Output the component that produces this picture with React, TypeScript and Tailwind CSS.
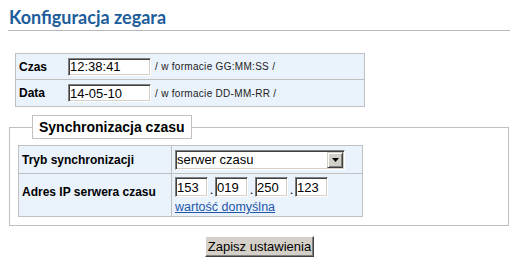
const inset =
  "border border-t-[#808080] border-l-[#808080] border-b-white border-r-white shadow-[inset_1px_1px_0_#404040,inset_-1px_-1px_0_#d4d0c8] bg-white";

function TextBox({ value, className }: { value: string; className: string }) {
  return (
    <input
      readOnly
      value={value}
      className={`${inset} ${className} px-[1px] text-[13px] leading-[14px] text-black outline-none`}
    />
  );
}

function Note({ children }: { children: React.ReactNode }) {
  return (
    <span className="ml-[4px] text-[10px] tracking-[0.3px] text-[#222]">
      {children}
    </span>
  );
}

export default function App() {
  return (
    <div className="w-[517px] h-[272px] bg-white pl-[8px] pr-[7px] font-['Liberation_Sans',Arial,sans-serif] text-black">
      <h1 className="mt-[7px] pl-[1px] pb-[3px] border-b border-[#b8b8b8] font-['Lato',sans-serif] text-[18px] leading-[20px] font-bold text-[#1e5d9b]">
        Konfiguracja zegara
      </h1>

      {/* czas / data */}
      <div className="ml-[7px] mt-[22px] w-[350px] border border-[#c0c0c0] bg-[#eaf2fb]">
        <div className="grid grid-cols-[52px_1fr] h-[26px] items-center border-b border-[#c0c0c0]">
          <span className="pl-[3px] text-[12px] font-bold">Czas</span>
          <div className="flex items-center">
            <TextBox value="12:38:41" className="w-[83px] h-[18px]" />
            <Note>/ w formacie GG:MM:SS /</Note>
          </div>
        </div>
        <div className="grid grid-cols-[52px_1fr] h-[26px] items-center">
          <span className="pl-[3px] text-[12px] font-bold">Data</span>
          <div className="flex items-center">
            <TextBox value="14-05-10" className="w-[83px] h-[18px]" />
            <Note>/ w formacie DD-MM-RR /</Note>
          </div>
        </div>
      </div>

      {/* synchronizacja */}
      <fieldset className="ml-[1px] mt-[8px] w-[500px] border border-[#c0c0c0] pl-[8px] pb-[8px]">
        <legend className="ml-[14px] px-[6px] border border-[#c0c0c0] bg-white text-[14px] leading-[22px] font-bold">
          Synchronizacja czasu
        </legend>

        <div className="mt-[6px] w-[345px] border border-[#c0c0c0] bg-[#eaf2fb]">
          <div className="grid grid-cols-[152px_1px_1fr] h-[28px] border-b border-[#c0c0c0]">
            <span className="flex items-center pl-[3px] text-[12px] font-bold">
              Tryb synchronizacji
            </span>
            <div className="bg-[#c0c0c0]" />
            <div className="flex items-center pl-[3px]">
              <div className={`${inset} flex items-center justify-between w-[170px] h-[20px] pl-[1px] pr-[1px]`}>
                <span className="text-[13px] leading-[14px]">serwer czasu</span>
                <span className="flex items-center justify-center w-[16px] h-[16px] bg-[#d4d0c8] border border-t-[#d4d0c8] border-l-[#d4d0c8] border-b-[#404040] border-r-[#404040] shadow-[inset_1px_1px_0_#ffffff,inset_-1px_-1px_0_#808080]">
                  <svg width="7" height="4" viewBox="0 0 7 4">
                    <path d="M0 0h7L3.5 4z" fill="#000" />
                  </svg>
                </span>
              </div>
            </div>
          </div>
          <div className="grid grid-cols-[152px_1px_1fr] h-[42px]">
            <span className="flex items-center pl-[3px] pb-[7px] text-[12px] font-bold">
              Adres IP serwera czasu
            </span>
            <div className="bg-[#c0c0c0]" />
            <div className="flex flex-col pl-[3px] pt-[3px]">
              <div className="flex items-end">
                <TextBox value="153" className="w-[33px] h-[20px]" />
                <span className="w-[7px] text-center text-[13px] leading-[14px]">.</span>
                <TextBox value="019" className="w-[33px] h-[20px]" />
                <span className="w-[7px] text-center text-[13px] leading-[14px]">.</span>
                <TextBox value="250" className="w-[33px] h-[20px]" />
                <span className="w-[7px] text-center text-[13px] leading-[14px]">.</span>
                <TextBox value="123" className="w-[33px] h-[20px]" />
              </div>
              <a href="#" className="mt-[3px] text-[12.5px] leading-[14px] text-[#2356a8] underline">
                wartość domyślna
              </a>
            </div>
          </div>
        </div>
      </fieldset>

      <div className="flex justify-center mt-[10px] pl-[1px]">
        <button className="h-[21px] w-[109px] bg-[#d4d0c8] border border-t-white border-l-white border-b-[#404040] border-r-[#404040] shadow-[inset_-1px_-1px_0_#808080] text-[13px] leading-[15px] text-black">
          Zapisz ustawienia
        </button>
      </div>
    </div>
  );
}
